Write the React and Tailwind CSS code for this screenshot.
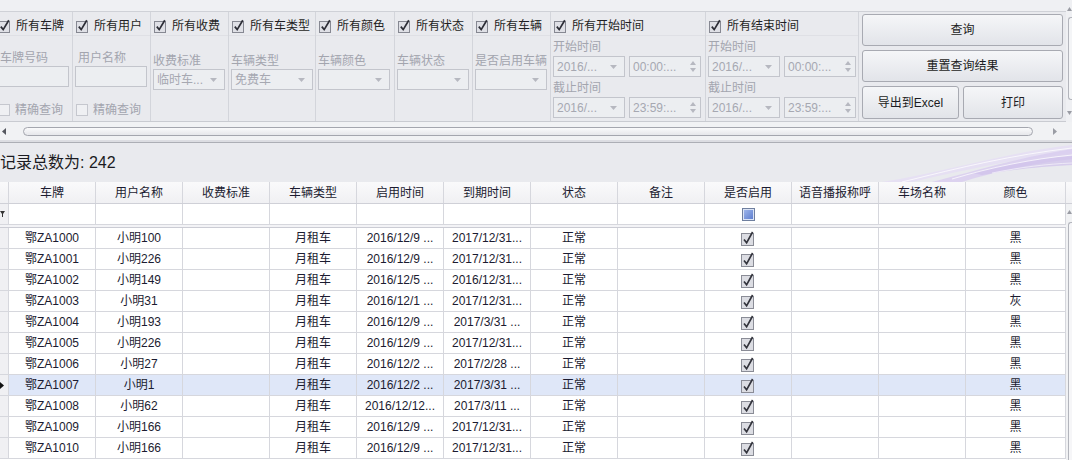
import React from 'react'

const cols = ['车牌', '用户名称', '收费标准', '车辆类型', '启用时间', '到期时间', '状态', '备注', '是否启用', '语音播报称呼', '车场名称', '颜色']

const rows = [
  ['鄂ZA1000', '小明100', '2016/12/9 ...', '2017/12/31...', '黑'],
  ['鄂ZA1001', '小明226', '2016/12/9 ...', '2017/12/31...', '黑'],
  ['鄂ZA1002', '小明149', '2016/12/5 ...', '2016/12/31...', '黑'],
  ['鄂ZA1003', '小明31', '2016/12/1 ...', '2017/12/31...', '灰'],
  ['鄂ZA1004', '小明193', '2016/12/9 ...', '2017/3/31 ...', '黑'],
  ['鄂ZA1005', '小明226', '2016/12/9 ...', '2017/12/31...', '黑'],
  ['鄂ZA1006', '小明27', '2016/12/2 ...', '2017/2/28 ...', '黑'],
  ['鄂ZA1007', '小明1', '2016/12/2 ...', '2017/3/31 ...', '黑'],
  ['鄂ZA1008', '小明62', '2016/12/12...', '2017/3/11 ...', '黑'],
  ['鄂ZA1009', '小明166', '2016/12/9 ...', '2017/12/31...', '黑'],
  ['鄂ZA1010', '小明166', '2016/12/9 ...', '2017/12/31...', '黑'],
]

function Tick() {
  return (
    <svg width="13" height="14" viewBox="0 0 13 14" className="shrink-0">
      <rect x="0.5" y="2.5" width="11" height="11" fill="#dfe0e6" stroke="#868892" />
      <path d="M2.8 7.6 L5.2 10.6 L10.8 1.2" fill="none" stroke="#2c2d36" strokeWidth="1.7" />
    </svg>
  )
}

function EmptyBox() {
  return <div className="h-[12px] w-[12px] shrink-0 border border-[#c5c7ce] bg-[#eff0f3]" />
}

function Arrow() {
  return (
    <svg width="7" height="4" viewBox="0 0 7 4" className="mr-[7px] shrink-0">
      <path d="M0 0 L7 0 L3.5 4 Z" fill="#b6b8c0" />
    </svg>
  )
}

function Spin() {
  return (
    <svg width="6" height="13" viewBox="0 0 6 13" className="mr-[4px] shrink-0">
      <path d="M0 5 L6 5 L3 1 Z" fill="#b6b8c0" />
      <path d="M0 8 L6 8 L3 12 Z" fill="#b6b8c0" />
    </svg>
  )
}

function Field({ w, text, kind }) {
  return (
    <div className={`flex h-[21px] items-center border border-[#c3c5cc] bg-[#eceef1] ${w}`}>
      <span className="flex-1 truncate pl-[3px] text-[#a6a8b1]">{text}</span>
      {kind === 'select' && <Arrow />}
      {kind === 'spin' && <Spin />}
    </div>
  )
}

function GroupHead({ label }) {
  return (
    <div className="flex h-[24px] items-center gap-[5px] border-b border-[#dfe0e5] pl-[3px] pt-[4px] text-[#1f1f24]">
      <Tick />
      <span>{label}</span>
    </div>
  )
}

function TextGroup({ w, head, label }) {
  return (
    <div className={`flex flex-col border-r border-[#d3d5db] ${w}`}>
      <GroupHead label={head} />
      <div className="mt-[15px] pl-[5px] leading-[14px] text-[#a3a5ae]">{label}</div>
      <div className="ml-[2px] mt-[1px] h-[21px] w-[72px] border border-[#c3c5cc] bg-[#eceef1]" />
      <div className="mt-[15px] flex h-[16px] items-center gap-[5px] pl-[3px] text-[#a3a5ae]">
        <EmptyBox />
        <span>精确查询</span>
      </div>
    </div>
  )
}

function SelectGroup({ w, head, label, value, fw }) {
  return (
    <div className={`flex flex-col border-r border-[#d3d5db] ${w}`}>
      <GroupHead label={head} />
      <div className="mt-[18px] pl-[2px] leading-[15px] text-[#a3a5ae]">{label}</div>
      <div className="pl-[2px]">
        <Field w={fw} text={value} kind="select" />
      </div>
    </div>
  )
}

function DateGroup({ w, head }) {
  return (
    <div className={`flex flex-col border-r border-[#d3d5db] ${w}`}>
      <GroupHead label={head} />
      <div className="mt-[4px] pl-[2px] leading-[15px] text-[#a3a5ae]">开始时间</div>
      <div className="mt-[1px] flex gap-[4px] pl-[2px]">
        <Field w="w-[72px]" text="2016/..." kind="select" />
        <Field w="w-[72px]" text="00:00:..." kind="spin" />
      </div>
      <div className="mt-[4px] pl-[2px] leading-[15px] text-[#a3a5ae]">截止时间</div>
      <div className="mt-[1px] flex gap-[4px] pl-[2px]">
        <Field w="w-[72px]" text="2016/..." kind="select" />
        <Field w="w-[72px]" text="23:59:..." kind="spin" />
      </div>
    </div>
  )
}

function Btn({ children, w }) {
  return (
    <div className={`flex items-center justify-center rounded-[3px] border border-[#a8aab2] bg-gradient-to-b from-[#f5f6f8] to-[#e2e4e9] text-[#1c1c22] ${w}`}>
      {children}
    </div>
  )
}

function GridCheck() {
  return (
    <svg width="14" height="15" viewBox="0 0 14 15">
      <rect x="0.5" y="2.5" width="12" height="12" fill="#dcdde3" stroke="#8a8c96" />
      <path d="M3 8.5 L5.6 11.8 L11.6 1" fill="none" stroke="#33343c" strokeWidth="1.7" />
    </svg>
  )
}

function Swoosh() {
  return (
    <svg width="190" height="39" viewBox="0 0 190 39" className="shrink-0">
      <path d="M0 39 C 60 30, 120 10, 190 2 L190 10 C 130 16, 70 30, 30 39 Z" fill="#e6e0f3" />
      <path d="M50 39 C 100 26, 140 14, 190 6 L190 16 C 140 22, 110 30, 80 39 Z" fill="#d8ccef" opacity="0.8" />
      <path d="M90 30 C 120 22, 150 16, 190 13 L190 22 C 150 24, 120 28, 100 32 Z" fill="#cfc1eb" opacity="0.7" />
      <path d="M20 39 C 80 24, 130 12, 190 5" fill="none" stroke="#ffffff" strokeWidth="0.8" opacity="0.9" />
      <path d="M70 36 C 110 24, 150 16, 190 12" fill="none" stroke="#ffffff" strokeWidth="0.8" opacity="0.9" />
      <path d="M110 30 C 140 24, 165 21, 190 20" fill="none" stroke="#ffffff" strokeWidth="0.7" opacity="0.8" />
    </svg>
  )
}

export default function App() {
  return (
    <div className="h-[460px] w-[1072px] overflow-hidden bg-[#eceef2] font-['Liberation_Sans','Noto_Sans_CJK_SC',sans-serif] text-[12px] leading-[16px]">
      {/* filter panel */}
      <div className="flex h-[122px]">
        <div className="flex w-[1066px] flex-col">
          <div className="h-[12px] border-b border-[#cfd1d7] bg-[#eff0f3]" />
          <div className="flex h-[110px] border-b border-[#c9cbd1] bg-[#e9eaee]">
            <div className="-ml-[5px] flex">
              <TextGroup w="w-[78px]" head="所有车牌" label="车牌号码" />
              <TextGroup w="w-[78px]" head="所有用户" label="用户名称" />
              <SelectGroup w="w-[78px]" head="所有收费" label="收费标准" value="临时车..." fw="w-[72px]" />
              <SelectGroup w="w-[87px]" head="所有车类型" label="车辆类型" value="免费车" fw="w-[82px]" />
              <SelectGroup w="w-[79px]" head="所有颜色" label="车辆颜色" value="" fw="w-[72px]" />
              <SelectGroup w="w-[78px]" head="所有状态" label="车辆状态" value="" fw="w-[72px]" />
              <SelectGroup w="w-[78px]" head="所有车辆" label="是否启用车辆" value="" fw="w-[72px]" />
              <DateGroup w="w-[155px]" head="所有开始时间" />
              <DateGroup w="w-[153px]" head="所有结束时间" />
            </div>
            <div className="flex flex-1 flex-col gap-[4px] px-[3px] pt-[2px]">
              <Btn w="h-[32px]">查询</Btn>
              <Btn w="h-[32px]">重置查询结果</Btn>
              <div className="flex gap-[4px]">
                <Btn w="h-[33px] w-[97px]">导出到Excel</Btn>
                <Btn w="h-[33px] flex-1">打印</Btn>
              </div>
            </div>
          </div>
        </div>
        <div className="flex w-[6px] flex-col items-end bg-[#eff0f3] pt-[7px]">
          <svg width="6" height="4" viewBox="0 0 6 4"><path d="M1 4 L6 4 L3.5 0 Z" fill="#9a9ca4" /></svg>
          <div className="mt-[6px] h-[83px] w-[4px] rounded-l-[3px] border border-r-0 border-[#b3b5bc] bg-[#f4f5f7]" />
          <svg width="6" height="4" viewBox="0 0 6 4" className="mt-[11px]"><path d="M1 0 L6 0 L3.5 4 Z" fill="#9a9ca4" /></svg>
        </div>
      </div>

      {/* horizontal scrollbar */}
      <div className="flex h-[21px] items-center border-b border-[#acaeb5] bg-[#f1f2f4] pb-[1px] shadow-[inset_0_-2px_0_#dcdde2]">
        <svg width="5" height="7" viewBox="0 0 5 7" className="ml-[2px]"><path d="M4 0 L4 7 L0 3.5 Z" fill="#55575f" /></svg>
        <div className="ml-[16px] h-[9px] w-[1010px] rounded-[5px] border border-[#a4a6ae] bg-gradient-to-b from-[#fafafb] to-[#e6e7eb]" />
        <svg width="5" height="7" viewBox="0 0 5 7" className="ml-[20px]"><path d="M0 0 L0 7 L4 3.5 Z" fill="#9a9ca4" /></svg>
      </div>

      {/* record count */}
      <div className="flex h-[39px] items-end justify-between bg-[#e9eaee]">
        <div className="mb-[9px] text-[16px] leading-[20px] text-[#1b1b22]">记录总数为: 242</div>
        <Swoosh />
      </div>

      {/* grid */}
      <div className="bg-white text-[#1b1b30]">
        <div className="flex h-[22px] border-b border-[#cfd0d7] bg-gradient-to-b from-[#fafafb] to-[#f0f0f3]">
          <div className="w-[9px] shrink-0 border-r border-[#d6d7dd]" />
          {cols.map((c, i) => (
            <div
              key={c}
              className={`flex shrink-0 items-center justify-center border-r border-[#d6d7dd] pt-[1px] ${i === 11 ? 'w-[100px]' : 'w-[87px]'}`}
            >
              {c}
            </div>
          ))}
          <div className="flex-1" />
        </div>
        <div className="flex">
          <div className="w-[1066px]">
            <div className="flex h-[21px] border-b border-[#d6d7dd]">
              <div className="flex w-[9px] shrink-0 items-center border-r border-[#d6d7dd] bg-[#f0f0f3]">
                <svg width="5" height="6" viewBox="0 0 5 6"><path d="M0 0 L5 0 L3 3 L3 6 L2 6 L2 3 Z" fill="#333" /></svg>
              </div>
              {cols.map((c, i) => (
                <div
                  key={c}
                  className={`flex shrink-0 items-center justify-center border-r border-[#d6d7dd] ${i === 11 ? 'w-[100px]' : 'w-[87px]'}`}
                >
                  {i === 8 && (
                    <div className="flex h-[13px] w-[13px] items-center justify-center border border-[#6f7f9f] bg-[#dbe4f6]">
                      <div className="h-[9px] w-[9px] bg-gradient-to-br from-[#9db4ea] to-[#5f7fd0]" />
                    </div>
                  )}
                </div>
              ))}
            </div>
            <div className="h-[3px] border-b border-[#cbccd4] bg-[#f3f3f6]" />
            {rows.map((r, idx) => {
              const sel = idx === 7
              const cells = [r[0], r[1], '', '月租车', r[2], r[3], '正常', '', 'check', '', '', r[4]]
              return (
                <div key={r[0]} className={`flex h-[21px] border-b border-[#d6d7dd] ${sel ? 'bg-[#dfe7f8]' : ''}`}>
                  <div className="flex w-[9px] shrink-0 items-center border-r border-[#d6d7dd] bg-[#f0f0f3]">
                    {sel && <svg width="5" height="7" viewBox="0 0 5 7"><path d="M0 0 L0 7 L4 3.5 Z" fill="#111" /></svg>}
                  </div>
                  {cells.map((v, i) => (
                    <div
                      key={i}
                      className={`flex shrink-0 items-center justify-center overflow-hidden whitespace-nowrap border-r border-[#d6d7dd] ${i === 11 ? 'w-[100px]' : 'w-[87px]'}`}
                    >
                      {v === 'check' ? <GridCheck /> : v}
                    </div>
                  ))}
                </div>
              )
            })}
          </div>
          <div className="flex w-[6px] flex-col items-end bg-[#f1f2f4] pt-[6px]">
            <svg width="6" height="4" viewBox="0 0 6 4"><path d="M1 4 L6 4 L3.5 0 Z" fill="#9a9ca4" /></svg>
            <div className="mt-[8px] h-[300px] w-[4px] rounded-l-[3px] border border-r-0 border-[#b3b5bc] bg-[#f6f6f8]" />
          </div>
        </div>
      </div>
    </div>
  )
}
